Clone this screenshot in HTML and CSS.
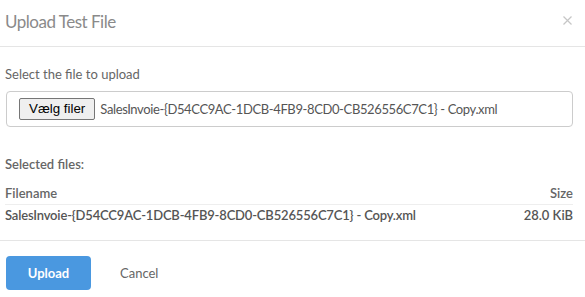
FILE: index.html
```html
<!DOCTYPE html>
<html>
<head>
<meta charset="utf-8">
<link rel="stylesheet" href="styles.css">
</head>
<body>
<div class="modal">
  <div class="modal-header">
    <h4 class="modal-title">Upload Test File</h4>
    <svg class="close" width="9" height="9" viewBox="0 0 9 9"><path d="M0.5 0.5 L8.5 8.5 M8.5 0.5 L0.5 8.5" stroke="#c6c6c6" stroke-width="1.2" fill="none"/></svg>
  </div>
  <div class="modal-body">
    <label class="field-label">Select the file to upload</label>
    <div class="file-input">
      <span class="file-btn">Vælg filer</span>
      <span class="file-name">SalesInvoie-{D54CC9AC-1DCB-4FB9-8CD0-CB526556C7C1} - Copy.xml</span>
    </div>
    <div class="selected-title">Selected files:</div>
    <div class="files-table">
      <div class="row head">
        <span>Filename</span>
        <span>Size</span>
      </div>
      <div class="row">
        <span class="fname">SalesInvoie-{D54CC9AC-1DCB-4FB9-8CD0-CB526556C7C1} - Copy.xml</span>
        <span>28.0 KiB</span>
      </div>
    </div>
  </div>
  <div class="modal-footer">
    <span class="btn-primary">Upload</span>
    <span class="btn-link">Cancel</span>
  </div>
</div>
</body>
</html>
```
FILE: styles.css
```css
* { box-sizing: border-box; }
html, body { margin: 0; padding: 0; background: #fff; }
body { font-family: Lato, "Open Sans", sans-serif; font-size: 13px; color: #555; width: 585px; }
.modal { width: 585px; }
.modal-header {
  display: flex; align-items: center;
  height: 47px; padding: 0 13px 0 5px;
  border-bottom: 1px solid #e5e5e5;
}
.modal-title { margin: 0; font-size: 17px; font-weight: 400; color: #8a8a8a; padding-bottom: 3px; letter-spacing: -0.5px; flex: 1; }
.close { display: block; margin-bottom: 5px; }
.modal-body { padding: 17px 12px 0 6px; }
.field-label { display: block; color: #666; margin-left: -1px; height: 20px; line-height: 20px; }
.file-input {
  margin-top: 7px; height: 36px; display: flex; align-items: center;
  border: 1px solid #ccc; border-radius: 4px; padding: 0 12px;
}
.file-btn {
  font-family: "Liberation Sans", Arial, sans-serif; font-size: 13.33px; color: #000;
  background: #efefef; border: 1px solid #767676; border-radius: 2px;
  padding: 0 9px; height: 22px; line-height: 20px;
}
.file-name { margin-left: 5px; color: #555; letter-spacing: -0.38px; }
.selected-title { margin-top: 27px; font-weight: 600; color: #666; margin-left: -1px; height: 20px; line-height: 20px; }
.files-table { margin-top: 9px; margin-left: -1px; }
.row { display: flex; justify-content: space-between; height: 21px; line-height: 21px; font-weight: 600; color: #555; }
.row .fname { letter-spacing: -0.17px; }
.row.head { color: #666; border-bottom: 1px solid #eee; height: 22px; }
.modal-footer {
  margin-top: 14px; border-top: 1px solid #e5e5e5; padding: 15px 6px;
  display: flex; align-items: center;
}
.btn-primary {
  width: 85px; height: 34px; background: #4a98e0; color: #fff; font-weight: 700;
  border-radius: 4px; display: flex; align-items: center; justify-content: center;
}
.btn-link { margin-left: 29px; color: #666; }
```
